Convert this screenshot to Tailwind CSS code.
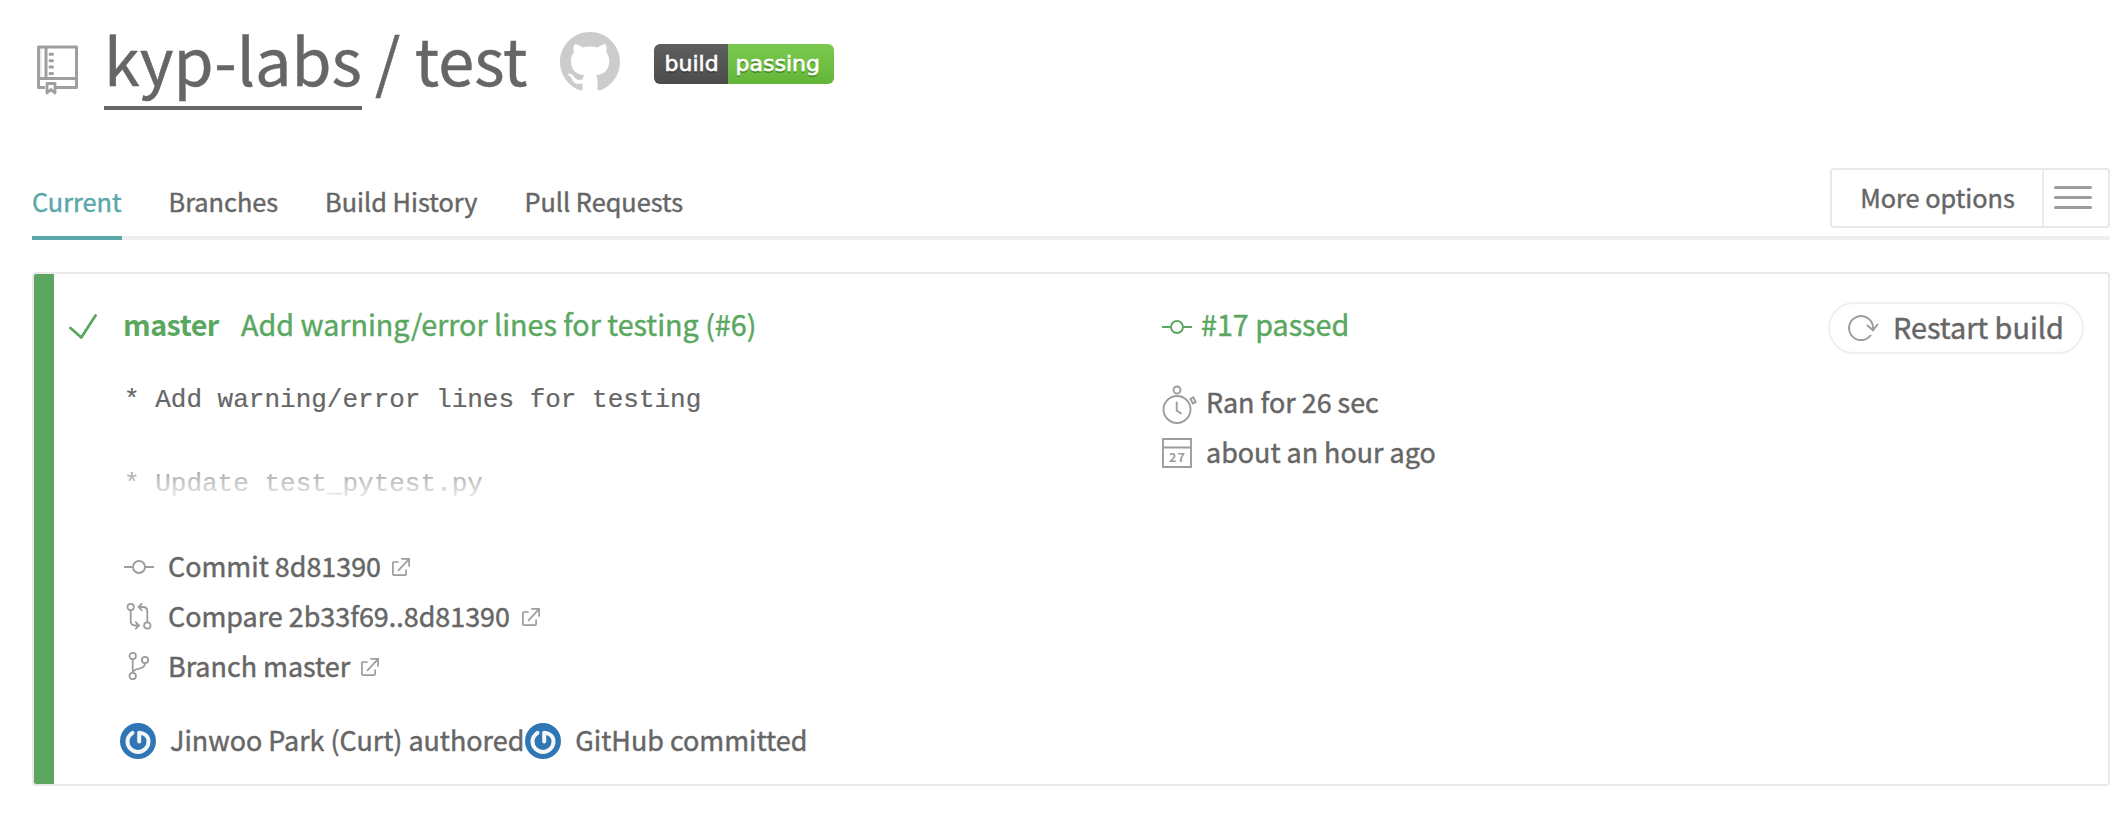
<!DOCTYPE html>
<html lang="en">
<head>
<meta charset="utf-8">
<title>kyp-labs / test</title>
<script src="https://cdn.jsdelivr.net/npm/@tailwindcss/browser@4"></script>
</head>
<body class="bg-white text-[#666] font-['Noto_Sans_CJK_SC',sans-serif] [-webkit-text-stroke:0.45px]">
<svg class="hidden">
  <symbol id="external" viewBox="0 0 18 18" fill="none" stroke="currentColor" stroke-width="1.7" stroke-linecap="round">
    <path d="M6 4H1.7Q.9 4 .9 5V16Q.9 17.100 2 17.100H13Q14.100 17.100 14.100 16V12M6.500 12.300 17 1.200M10 .9H17.100V8"/>
  </symbol>
  <symbol id="commit" viewBox="0 0 30 14" fill="none" stroke="currentColor" stroke-width="1.900">
    <circle cx="15" cy="7" r="6"/><path d="M0 7H9M21 7H30"/>
  </symbol>
  <symbol id="avatar" viewBox="0 0 36 36">
    <circle cx="18" cy="18" r="18" fill="#3076b5"/>
    <path d="M12.500 9.800C9.300 12 7.500 14.800 7.500 18.500A10.500 10.500 0 0 0 28.500 18.500C28.500 13.500 25 10 19.200 9.700V18.500" fill="none" stroke="#f4f8f8" stroke-width="4" stroke-linecap="round" stroke-linejoin="round"/>
  </symbol>
</svg>

<div class="w-[2110px] pl-8">
  <header class="flex h-[110px] items-start pt-[10px]">
    <svg class="ml-[5px] mt-[35px] h-[50px] w-[41px] text-[#9f9f9f]" viewBox="0 0 41 50" fill="none" stroke="currentColor" stroke-width="3" stroke-linejoin="round">
      <path d="M8 42.500H1.500V2H39.500V42.500H18M1.500 33.500H39.500M9 2V33.500"/><path d="M4 2V33" stroke-width="1" opacity=".4"/>
      <path d="M13 9.300H15.500M13 15.700H15.500M13 22H15.500M13 28.500H15.500" stroke-linecap="round"/>
      <path d="M10 48V38.500H18V48L14 44.500Z" stroke-width="2.800"/>
    </svg>
    <h1 class="ml-[26px] flex h-[100px] items-start text-[64.8px] leading-[96px]">
      <a class="h-[100px] border-b-4 border-[#666]">kyp-labs</a>
      <span class="ml-[13px]">/ test</span>
    </h1>
    <svg class="ml-[32px] mt-[22px] size-[60px] text-[#ccc]" viewBox="0 0 16 16" fill="currentColor">
      <path d="M8 0C3.580 0 0 3.580 0 8c0 3.540 2.290 6.530 5.470 7.590.4.070.55-.17.55-.38 0-.19-.01-.82-.01-1.490-2.010.37-2.530-.49-2.690-.94-.09-.23-.48-.94-.82-1.130-.28-.15-.68-.52-.01-.53.63-.01 1.080.58 1.230.82.72 1.210 1.870.87 2.330.66.07-.52.28-.87.51-1.070-1.780-.2-3.640-.89-3.640-3.950 0-.87.31-1.590.82-2.150-.08-.2-.36-1.020.08-2.120 0 0 .67-.21 2.200.82.64-.18 1.320-.27 2-.27s1.360.09 2 .27c1.530-1.040 2.200-.82 2.200-.82.44 1.100.16 1.920.08 2.120.51.56.82 1.270.82 2.150 0 3.070-1.870 3.750-3.650 3.950.29.25.54.73.54 1.480 0 1.070-.01 1.930-.01 2.200 0 .21.15.46.55.38A8.010 8.010 0 0 0 16 8c0-4.420-3.580-8-8-8Z"/>
    </svg>
    <div class="ml-[34px] mt-[34px] flex h-10 w-[180px] overflow-hidden rounded-[6px] font-['DejaVu_Sans',sans-serif] text-[22px] leading-[40px] text-white [text-shadow:0_2px_0_rgba(1,1,1,.3)] [-webkit-text-stroke:0.6px]">
      <span class="w-[74px] bg-linear-to-b from-[#5f5f5f] to-[#4c4c4c] pl-[11px]">build</span>
      <span class="w-[106px] bg-linear-to-b from-[#79c94e] to-[#64b637] pl-2">passing</span>
    </div>
  </header>

  <nav class="mt-[54px] flex h-[76px] items-start justify-between border-b-4 border-[#efefef] text-[25.3px]">
    <div class="flex gap-[47px] leading-[74px]">
      <a class="h-[76px] border-b-4 border-[#5aa8ab] text-[#5aa8ab]">Current</a>
      <a>Branches</a>
      <a>Build History</a>
      <a>Pull Requests</a>
    </div>
    <button class="mt-1 flex h-[60px] w-[280px] rounded-[4px] border-2 border-[#e8e8e8] leading-[54px]">
      <span class="h-14 w-[212px] border-r-2 border-[#ededed] pl-px">More options</span>
      <span class="flex flex-col gap-[7px] pl-[10px] pt-4">
        <i class="h-[3px] w-[38px] rounded-full bg-[#9d9d9d]"></i>
        <i class="h-[3px] w-[38px] rounded-full bg-[#9d9d9d]"></i>
        <i class="h-[3px] w-[38px] rounded-full bg-[#9d9d9d]"></i>
      </span>
    </button>
  </nav>

  <main class="mt-8 flex h-[514px] overflow-hidden rounded-[4px] border-2 border-[#e8e8e8]">
    <div class="w-5 shrink-0 bg-[#5ba55f]"></div>
    <section class="w-[1108px] shrink-0">
      <h2 class="flex h-[54px] items-start pt-[24px] text-[28.7px] leading-[52px] text-[#5aa85f]">
        <svg class="ml-[15px] mt-4 h-[26px] w-[29px]" viewBox="0 0 29 26" fill="none" stroke="currentColor" stroke-width="2.800" stroke-linecap="round" stroke-linejoin="round"><path d="M1.500 14 12.300 23.500 26.500 1.500"/></svg>
        <span class="ml-[25px] w-[96px] whitespace-nowrap font-bold tracking-[-0.5px] [-webkit-text-stroke:0]">master</span>
        <span class="ml-[22px] whitespace-nowrap">Add warning/error lines for testing (#6)</span>
      </h2>
      <div class="relative ml-[70px] mt-[51px] h-[126px] overflow-hidden font-['Liberation_Mono',monospace] text-[26px] leading-[42px] [-webkit-text-stroke:0.2px]">
        <pre class="font-['Liberation_Mono',monospace]">* Add warning/error lines for testing

* Update test_pytest.py</pre>
        <div class="absolute inset-x-0 bottom-0 h-[60px] bg-linear-to-b from-white/0 to-white"></div>
      </div>
      <ul class="ml-[70px] mt-[36px] text-[26.9px] leading-[50px]">
        <li class="flex h-[50px] items-center"><svg class="mt-px h-[14px] w-[30px] text-[#9d9d9d]"><use href="#commit"/></svg><span class="ml-[14px]">Commit 8d81390</span><svg class="ml-[10.500px] mt-px size-[18px] text-[#9d9d9d]"><use href="#external"/></svg></li>
        <li class="flex h-[50px] items-center">
          <svg class="ml-[2px] h-7 w-[26px] text-[#9d9d9d]" viewBox="0 0 26 28" fill="none" stroke="currentColor" stroke-width="1.800" stroke-linecap="round"><circle cx="4.700" cy="5" r="3.200"/><circle cx="21.300" cy="23.500" r="3.200"/><path d="M4.700 8.200V19Q4.700 23.500 9 23.500H13M9.800 20.200 13 23.500 9.800 26.700M21.300 20.300V9.500Q21.300 5 17 5H12.500M15.700 1.800 12.500 5 15.700 8.200"/></svg>
          <span class="ml-[16px]">Compare 2b33f69..8d81390</span><svg class="ml-3 mt-px size-[18px] text-[#9d9d9d]"><use href="#external"/></svg></li>
        <li class="flex h-[50px] items-center">
          <svg class="ml-[4px] h-7 w-[22px] text-[#9d9d9d]" viewBox="0 0 22 28" fill="none" stroke="currentColor" stroke-width="1.800" stroke-linecap="round"><circle cx="4.700" cy="4" r="3.200"/><circle cx="4.700" cy="24" r="3.200"/><circle cx="17" cy="8" r="3.200"/><path d="M4.700 7.200V20.800M17 11.200C17 19 5.500 15 4.700 20.800"/></svg>
          <span class="ml-[18px]">Branch master</span><svg class="ml-[11px] mt-px size-[18px] text-[#9d9d9d]"><use href="#external"/></svg></li>
      </ul>
      <div class="ml-[66px] mt-[26px] flex h-[48px] items-center text-[26.9px] leading-[46px]">
        <svg class="size-9"><use href="#avatar"/></svg><span class="mb-[3px] ml-[14px]">Jinwoo Park (Curt) authored</span>
        <svg class="ml-px size-9"><use href="#avatar"/></svg><span class="mb-[3px] ml-[14px]">GitHub committed</span>
      </div>
    </section>
    <section class="grow">
      <h2 class="flex h-[77px] items-start pt-[24px] text-[28.700px] leading-[52px] text-[#5aa85f]">
        <svg class="mt-[22px] h-[14px] w-[30px]"><use href="#commit"/></svg><span class="ml-[9px]">#17 passed</span>
      </h2>
      <ul class="mt-[26px] text-[26.9px] leading-[50px]">
        <li class="flex h-[50px] items-start">
          <svg class="mt-[8px] h-[40px] w-9 text-[#9d9d9d]" viewBox="0 0 36 40" fill="none" stroke="currentColor" stroke-width="1.900" stroke-linecap="round"><circle cx="15" cy="5" r="3.500"/><circle cx="15" cy="24.500" r="13.500"/><path d="M14.700 17.500V25.500L19 28.500M28.500 13.800 31.300 12.300 33.700 17 30.800 18.500Z"/></svg>
          <span class="ml-[8px]">Ran for 26 sec</span></li>
        <li class="flex h-[50px] items-start">
          <svg class="mt-[11px] h-[30px] w-[30px] text-[#9d9d9d]" viewBox="0 0 30 30" fill="none" stroke="currentColor" stroke-width="1.900"><path d="M1 1H29V29H1ZM1 9.500H29"/><text x="7" y="23.500" font-family="Noto Sans CJK SC" font-size="12.500" font-weight="bold" letter-spacing="1" fill="currentColor" stroke="none">27</text></svg>
          <span class="ml-[14px]">about an hour ago</span></li>
      </ul>
    </section>
    <button class="mr-6 mt-7 flex h-[52px] w-[256px] shrink-0 items-start rounded-full border-2 border-[#efefef] text-[28.800px] leading-[48px]">
      <svg class="ml-[17px] mt-[9px] h-[29px] w-[32px] text-[#9d9d9d]" viewBox="0 0 32 29" fill="none" stroke="currentColor" stroke-width="2" stroke-linecap="round"><path d="M23.500 22.500A12 12 0 1 1 26 14V17M20.500 12.500 26 17.300 30.500 11.500"/></svg>
      <span class="-mt-px ml-[14px]">Restart build</span>
    </button>
  </main>
</div>
</body>
</html>
